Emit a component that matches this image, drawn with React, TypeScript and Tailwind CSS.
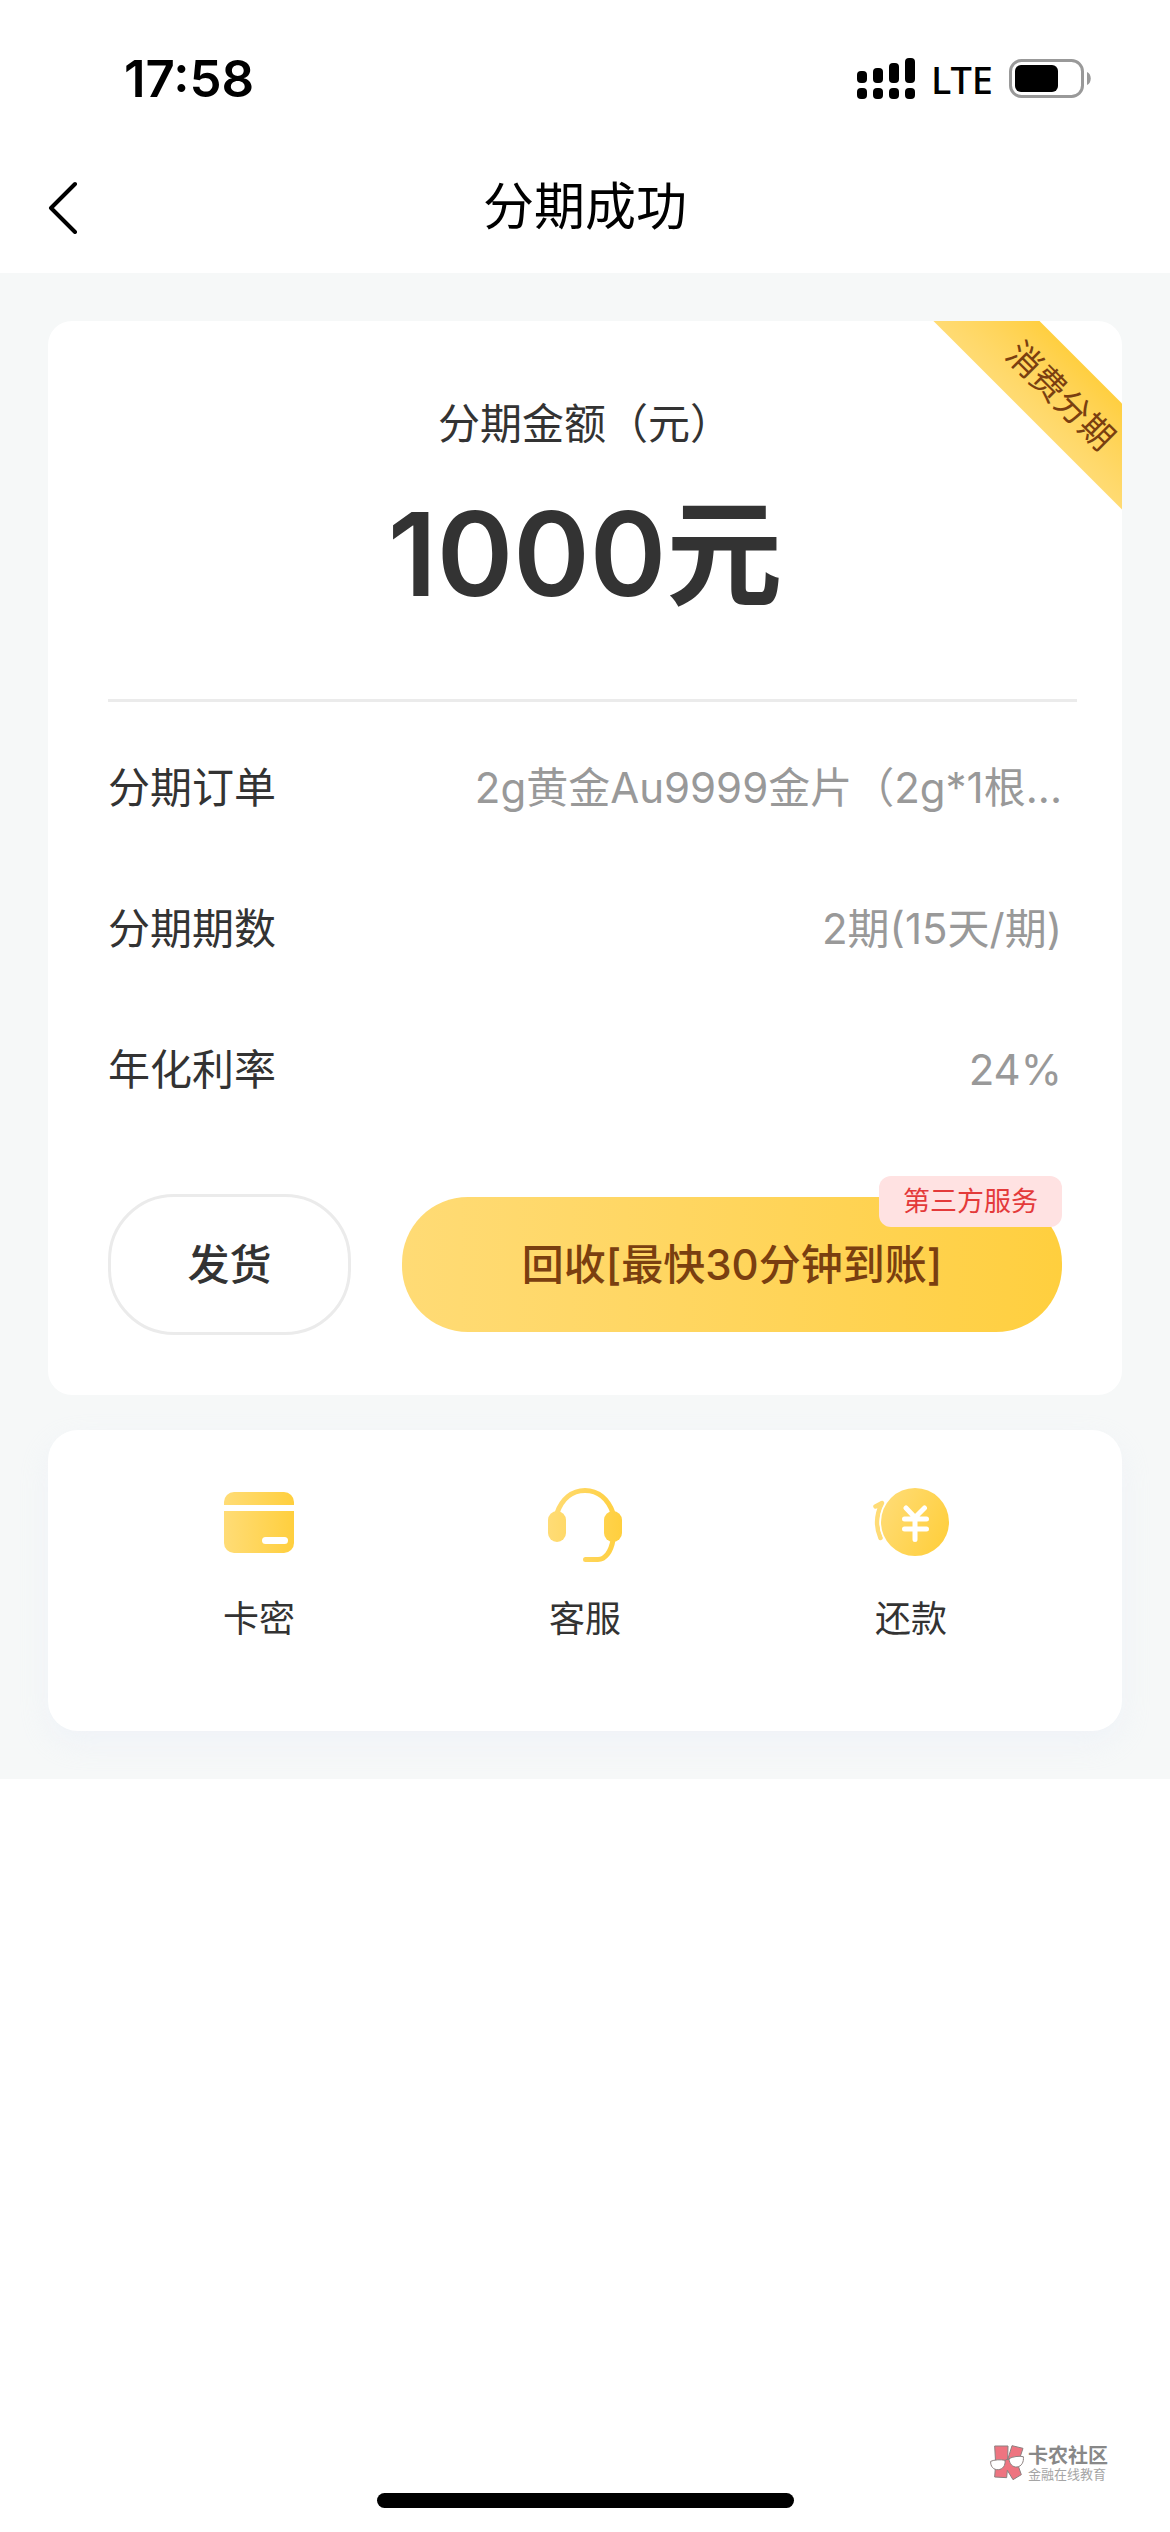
import React from 'react';

const orderRows = [
  { label: '分期订单', value: '2g黄金Au9999金片（2g*1根...' },
  { label: '分期期数', value: '2期(15天/期)' },
  { label: '年化利率', value: '24%' },
];

const SignalIcon: React.FC = () => (
  <svg className="w-[58px] h-[41px]" viewBox="0 0 58 41" aria-hidden="true">
    <rect x="0" y="13" width="10" height="12" rx="4" />
    <rect x="16" y="10" width="10" height="15" rx="4" />
    <rect x="32" y="5" width="10" height="20" rx="4" />
    <rect x="48" y="0" width="10" height="25" rx="4" />
    <rect x="0" y="30" width="10" height="11" rx="4" />
    <rect x="16" y="30" width="10" height="11" rx="4" />
    <rect x="32" y="30" width="10" height="11" rx="4" />
    <rect x="48" y="30" width="10" height="11" rx="4" />
  </svg>
);

const BatteryIcon: React.FC = () => (
  <svg className="w-[82px] h-[39px]" viewBox="0 0 82 39" aria-hidden="true">
    <rect x="1.5" y="1.5" width="72" height="36" rx="11" fill="none" stroke="#999" strokeWidth="3" />
    <rect x="6" y="6" width="43" height="27" rx="6" />
    <path d="M78 13c5 2 5 11 0 13z" fill="#999" />
  </svg>
);

const CardIcon: React.FC = () => (
  <svg className="w-[78px] h-[78px]" viewBox="0 0 78 78" aria-hidden="true">
    <defs>
      <linearGradient id="cardFill" x1="4" y1="0" x2="74" y2="0" gradientUnits="userSpaceOnUse">
        <stop offset="0" stopColor="#ffdc76" />
        <stop offset="1" stopColor="#ffcf3e" />
      </linearGradient>
    </defs>
    <path d="M4 19v-3A10 10 0 0 1 14 6h50a10 10 0 0 1 10 10v3z" fill="url(#cardFill)" />
    <path d="M4 25h70v32a10 10 0 0 1-10 10H14A10 10 0 0 1 4 57z" fill="url(#cardFill)" />
    <rect x="42" y="51" width="26" height="7" rx="3.5" fill="#fff" />
  </svg>
);

const HeadsetIcon: React.FC = () => (
  <svg className="w-[78px] h-[78px]" viewBox="0 0 78 78" aria-hidden="true">
    <defs>
      <linearGradient id="headsetFill" x1="2" y1="0" x2="76" y2="0" gradientUnits="userSpaceOnUse">
        <stop offset="0" stopColor="#ffdc76" />
        <stop offset="1" stopColor="#ffcf3e" />
      </linearGradient>
    </defs>
    <path
      d="M11 27C16 13 26 4.500 39 4.500S62 13 67 27M67 54C65 66 59 73.500 52 73.500H39.500"
      fill="none"
      stroke="url(#headsetFill)"
      strokeWidth="5"
      strokeLinecap="round"
    />
    <rect x="2" y="25" width="18" height="31" rx="9" fill="url(#headsetFill)" />
    <rect x="58" y="25" width="18" height="31" rx="9" fill="url(#headsetFill)" />
  </svg>
);

const CoinIcon: React.FC = () => (
  <svg className="w-[78px] h-[78px]" viewBox="0 0 78 78" aria-hidden="true">
    <defs>
      <linearGradient id="coinFill" x1="8" y1="16" x2="76" y2="50" gradientUnits="userSpaceOnUse">
        <stop offset="0" stopColor="#ffdc76" />
        <stop offset="1" stopColor="#ffcf3e" />
      </linearGradient>
    </defs>
    <path
      d="M3.500 20.500L10 17Q1 35 8.500 52"
      fill="none"
      stroke="#ffdc76"
      strokeWidth="4.500"
      strokeLinecap="round"
      strokeLinejoin="round"
    />
    <circle cx="43" cy="36" r="35.500" fill="#fff" />
    <circle cx="43" cy="36" r="34" fill="url(#coinFill)" />
    <path
      d="M34 22l9 9.500 9.500-9.500M32.500 33h22M32.500 43h22M43 32v21.500"
      fill="none"
      stroke="#fff"
      strokeWidth="5"
      strokeLinecap="round"
      strokeLinejoin="round"
    />
  </svg>
);

const CommunityLogo: React.FC = () => (
  <svg className="w-[35px] h-[36px]" viewBox="0 0 105 108" aria-hidden="true">
    <path
      d="M14 3h40l-1 41 13-42 33 8-16 48 11 31-25 15-17-28-2 22-36-2 3-40z"
      fill="#ee7480"
      stroke="#8c8080"
      strokeWidth="3"
      strokeLinejoin="round"
    />
    <g fill="#fff" stroke="#8c8080" strokeWidth="3">
      <path d="M2 49c10-5 32-6 43-3 2 16-7 27-20 28C10 75 1 64 2 49z" />
      <path d="M57 41c10-6 32-9 43-6 2 16-5 29-19 31-13 1-23-9-24-25z" />
      <path d="M45 46q6-4 12-3" fill="none" />
    </g>
  </svg>
);

const actions = [
  { label: '卡密', icon: <CardIcon /> },
  { label: '客服', icon: <HeadsetIcon /> },
  { label: '还款', icon: <CoinIcon /> },
];

const App: React.FC = () => {
  return (
    <div className="min-h-screen flex flex-col bg-white text-[#333] font-['Inter','Noto_Sans_CJK_SC',sans-serif]">
      <header className="text-black">
        <div className="h-[141px] pt-4 pl-[124px] pr-[79px] flex items-center justify-between">
          <span className="text-[51px] leading-[60px] font-semibold">17:58</span>
          <div className="flex items-center gap-4">
            <SignalIcon />
            <span className="text-[38px] leading-[60px] font-medium font-['Noto_Sans',sans-serif]">LTE</span>
            <BatteryIcon />
          </div>
        </div>
        <div className="h-[132px] px-12 grid grid-cols-[1fr_auto_1fr] items-center">
          <button type="button" aria-label="返回" className="justify-self-start">
            <svg className="w-[30px] h-[54px]" viewBox="0 0 30 54" fill="none" stroke="currentColor" strokeWidth="4" strokeLinecap="round" strokeLinejoin="round">
              <path d="M27 4L3 28l24 24" />
            </svg>
          </button>
          <h1 className="text-[51px] leading-[60px]">分期成功</h1>
        </div>
      </header>

      <main className="bg-[#f6f8f8] p-12 flex flex-col gap-[35px]">
        <section className="relative overflow-hidden bg-white rounded-3xl pt-[71px] pb-[60px]">
          <div className="absolute top-[37px] -right-[139px] w-[400px] h-[75px] rotate-45 flex items-center justify-center bg-linear-to-t from-[#ffdb73] to-[#ffcf40] text-[34px] leading-none text-[#7a3f10]">
            消费分期
          </div>

          <p className="text-center text-[42px] leading-[63px]">分期金额（元）</p>
          <p className="mt-6 text-center text-[116px] leading-[150px] font-semibold">1000元</p>

          <div className="mt-[70px] ml-[60px] mr-[45px] h-[3px] bg-[#ebebeb]" />

          <dl className="pt-[15px] px-[60px] text-[42px] leading-[63px]">
            {orderRows.map((row) => (
              <div key={row.label} className="h-[141px] flex items-center justify-between">
                <dt>{row.label}</dt>
                <dd className="text-[#999]">{row.value}</dd>
              </div>
            ))}
          </dl>

          <div className="mt-[54px] px-[60px] flex items-center gap-[51px] text-[42px] leading-[63px] font-medium">
            <button type="button" className="w-[243px] h-[141px] rounded-[66px] border-3 border-[#ebebeb]">
              发货
            </button>
            <button type="button" className="relative flex-1 h-[135px] rounded-[66px] bg-linear-to-r from-[#ffdb75] to-[#ffcf3e] text-[#7a3f10]">
              回收[最快30分钟到账]
              <span className="absolute -top-[21px] right-0 px-6 rounded-xl bg-[#ffe2e2] text-[27px] leading-[51px] font-normal text-[#e43a3a]">
                第三方服务
              </span>
            </button>
          </div>
        </section>

        <section className="h-[301px] px-12 pt-[56px] grid grid-cols-3 items-start bg-white rounded-[30px] shadow-[0_12px_30px_rgba(225,232,248,0.3)]">
          {actions.map((action) => (
            <button key={action.label} type="button" className="flex flex-col items-center gap-7 text-[36px] leading-[54px]">
              {action.icon}
              {action.label}
            </button>
          ))}
        </section>
      </main>

      <footer className="mt-auto pb-6 flex flex-col">
        <div className="self-end mr-[62px] mb-3 flex items-center gap-[3px]">
          <CommunityLogo />
          <div>
            <p className="text-[20px] leading-[22px] font-bold text-[#888]">卡农社区</p>
            <p className="text-[13px] leading-[14px] text-[#a5a5a5]">金融在线教育</p>
          </div>
        </div>
        <div className="self-center w-[417px] h-[15px] rounded-full bg-black" />
      </footer>
    </div>
  );
};

export default App;
